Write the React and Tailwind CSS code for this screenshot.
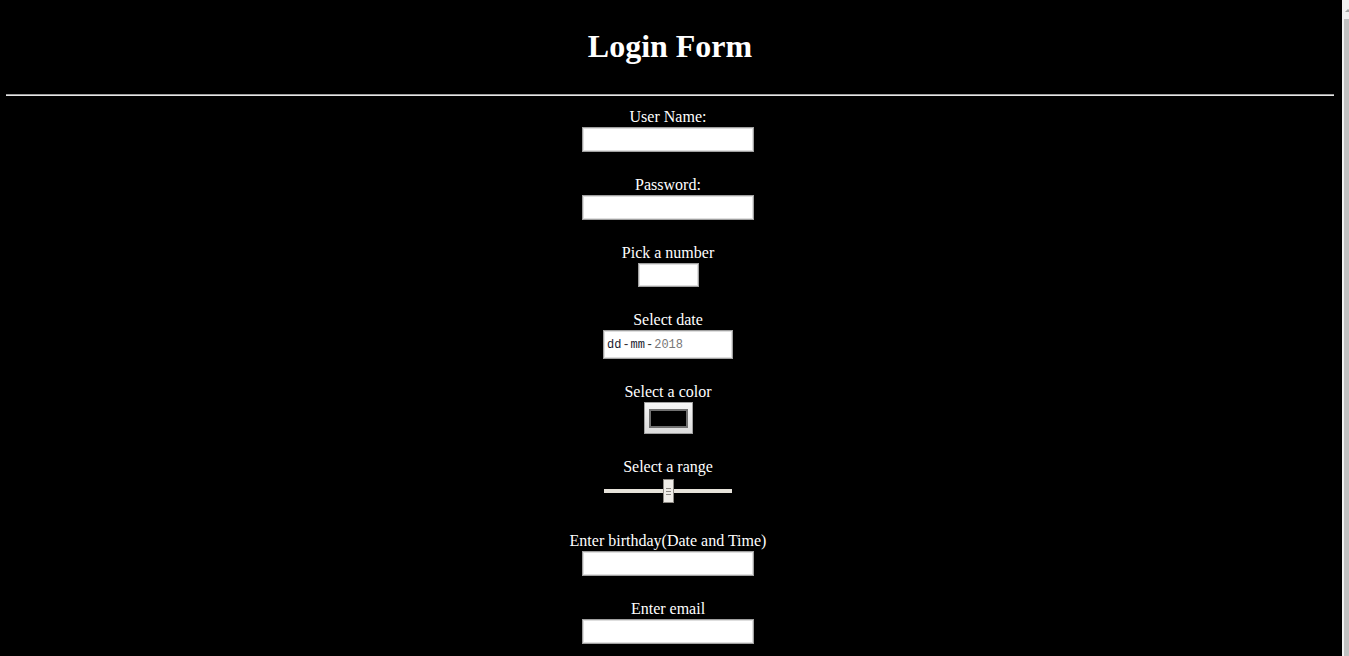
import React from 'react';

const serif = "font-['Liberation_Serif','Times_New_Roman',serif]";
const fieldBox = 'border border-[#a0a0a0] bg-white shadow-[inset_0_0_0_1px_#dedede]';

const Label = ({ children }) => (
  <div className="h-[20px] leading-[20px] text-[16px] whitespace-nowrap">{children}</div>
);

const TextField = ({ label, type = 'text', className = '' }) => (
  <div className={`flex flex-col items-center ${className}`}>
    <Label>{label}</Label>
    <input type={type} className={`${fieldBox} w-[172px] h-[25px] outline-none`} />
  </div>
);

const DateField = () => (
  <div className="flex flex-col items-center mt-[23px]">
    <Label>Select date</Label>
    <div className={`${fieldBox} w-[130px] h-[29px] flex items-center pl-[3px] font-['Liberation_Mono','DejaVu_Sans_Mono',monospace] text-[12px] leading-none`}>
      <span className="text-[#1a1a2e]">dd</span>
      <span className="mx-[1px] text-[#333]">-</span>
      <span className="text-[#1a1a2e]">mm</span>
      <span className="mx-[1px] text-[#333]">-</span>
      <span className="text-[#777]">2018</span>
    </div>
  </div>
);

const ColorField = () => (
  <div className="flex flex-col items-center mt-[23px]">
    <Label>Select a color</Label>
    <div className="ml-[2px] w-[49px] h-[32px] border border-[#a0a0a0] bg-gradient-to-b from-[#f6f6f6] to-[#dcdcdc] flex items-center justify-center">
      <div className="w-[39px] h-[19px] border-2 border-[#707070] bg-black" />
    </div>
  </div>
);

const RangeField = () => (
  <div className="flex flex-col items-center mt-[23px]">
    <Label>Select a range</Label>
    <div className="relative mt-[2px] w-[128px] h-[24px] flex items-center">
      <div className="w-full h-[4px] bg-[#e6e2da]" />
      <div className="absolute left-[59px] top-0 w-[11px] h-[24px] border border-[#8f8b85] bg-[#efece7] flex flex-col items-center justify-center gap-[2px]">
        <span className="w-[5px] h-[1px] bg-[#8a8680]" />
        <span className="w-[5px] h-[1px] bg-[#8a8680]" />
        <span className="w-[5px] h-[1px] bg-[#8a8680]" />
      </div>
    </div>
  </div>
);

export default function App() {
  return (
    <div className="flex min-h-[656px] bg-black">
      <div className={`flex-1 text-white ${serif}`}>
        <h1 className="pt-[28px] pr-[2px] text-center text-[32px] font-bold leading-[37px]">Login Form</h1>
        <div className="mt-[29px] ml-[6px] mr-[8px] h-[2px] border-t border-[#9c9c9c] border-b border-b-[#e6e6e6]" />
        <form className="flex flex-col items-center pt-[11px] mr-[6px]">
          <TextField label="User Name:" />
          <TextField label="Password:" type="password" className="mt-[23px]" />
          <div className="flex flex-col items-center mt-[23px]">
            <Label>Pick a number</Label>
            <input type="text" className={`${fieldBox} ml-[2px] w-[61px] h-[24px] outline-none`} />
          </div>
          <DateField />
          <ColorField />
          <RangeField />
          <TextField label="Enter birthday(Date and Time)" className="mt-[28px]" />
          <TextField label="Enter email" className="mt-[23px]" />
        </form>
      </div>
      <div className="w-[7px] bg-[#f1f1f1] flex flex-col">
        <div className="h-[19px] flex items-start justify-end pt-[9px]">
          <div className="w-0 h-0 border-l-[3px] border-l-transparent border-r-[3px] border-r-transparent border-b-[3px] border-b-[#a3a3a3] mr-[-2px]" />
        </div>
        <div className="flex-1 ml-[2px] bg-[#c1c1c1]" />
      </div>
    </div>
  );
}
